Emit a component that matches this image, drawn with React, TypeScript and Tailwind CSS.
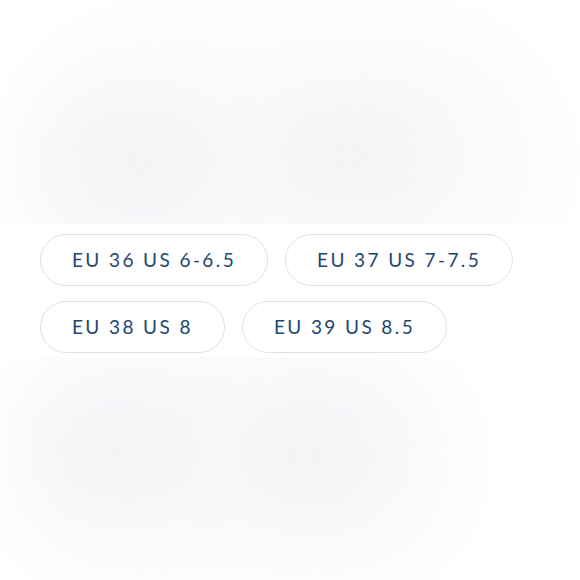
import React from "react";

const sizes = ["EU 36 US 6-6.5", "EU 37 US 7-7.5", "EU 38 US 8", "EU 39 US 8.5"];

type Blob = { l: number; t: number; w: number; h: number; c: string; b: number };

function Blurred({ blobs }: { blobs: Blob[] }) {
  return (
    <div className="relative h-full w-full overflow-hidden bg-white">
      {blobs.map((b, i) => (
        <div
          key={i}
          className="absolute rounded-full"
          style={{ left: b.l, top: b.t, width: b.w, height: b.h, background: b.c, filter: `blur(${b.b}px)` }}
        />
      ))}
    </div>
  );
}

export default function App() {
  return (
    <div className="flex h-[580px] w-[580px] flex-col bg-white" style={{ fontFamily: "Lato, 'Open Sans', sans-serif" }}>
      <div className="h-[224px]">
        <Blurred
          blobs={[
            { l: 10, t: 20, w: 550, h: 280, c: "#fafbfc", b: 30 },
            { l: 40, t: 95, w: 200, h: 140, c: "#f5f6f8", b: 30 },
            { l: 255, t: 90, w: 200, h: 130, c: "#f5f6f8", b: 30 },
            { l: 100, t: 135, w: 80, h: 50, c: "#f2f3f5", b: 20 },
            { l: 310, t: 130, w: 80, h: 50, c: "#f2f3f5", b: 20 },
          ]}
        />
      </div>
      <div className="flex h-[133px] flex-wrap content-start gap-x-[17px] gap-y-[15px] bg-white pl-[40px] pt-[10px]">
        {sizes.map((s) => (
          <button
            key={s}
            className="flex h-[52px] items-center rounded-full border-[1.5px] border-[#dfe1e4] bg-white px-[31px] text-[19px] tracking-[2.4px] text-[#1d4673]"
          >
            {s}
          </button>
        ))}
      </div>
      <div className="flex-1">
        <Blurred
          blobs={[
            { l: 0, t: -30, w: 470, h: 270, c: "#fafbfc", b: 30 },
            { l: 30, t: 20, w: 190, h: 140, c: "#f5f6f8", b: 30 },
            { l: 215, t: 25, w: 190, h: 140, c: "#f5f6f8", b: 30 },
            { l: 85, t: 75, w: 80, h: 50, c: "#f2f3f5", b: 20 },
            { l: 265, t: 75, w: 80, h: 50, c: "#f2f3f5", b: 20 },
          ]}
        />
      </div>
    </div>
  );
}
